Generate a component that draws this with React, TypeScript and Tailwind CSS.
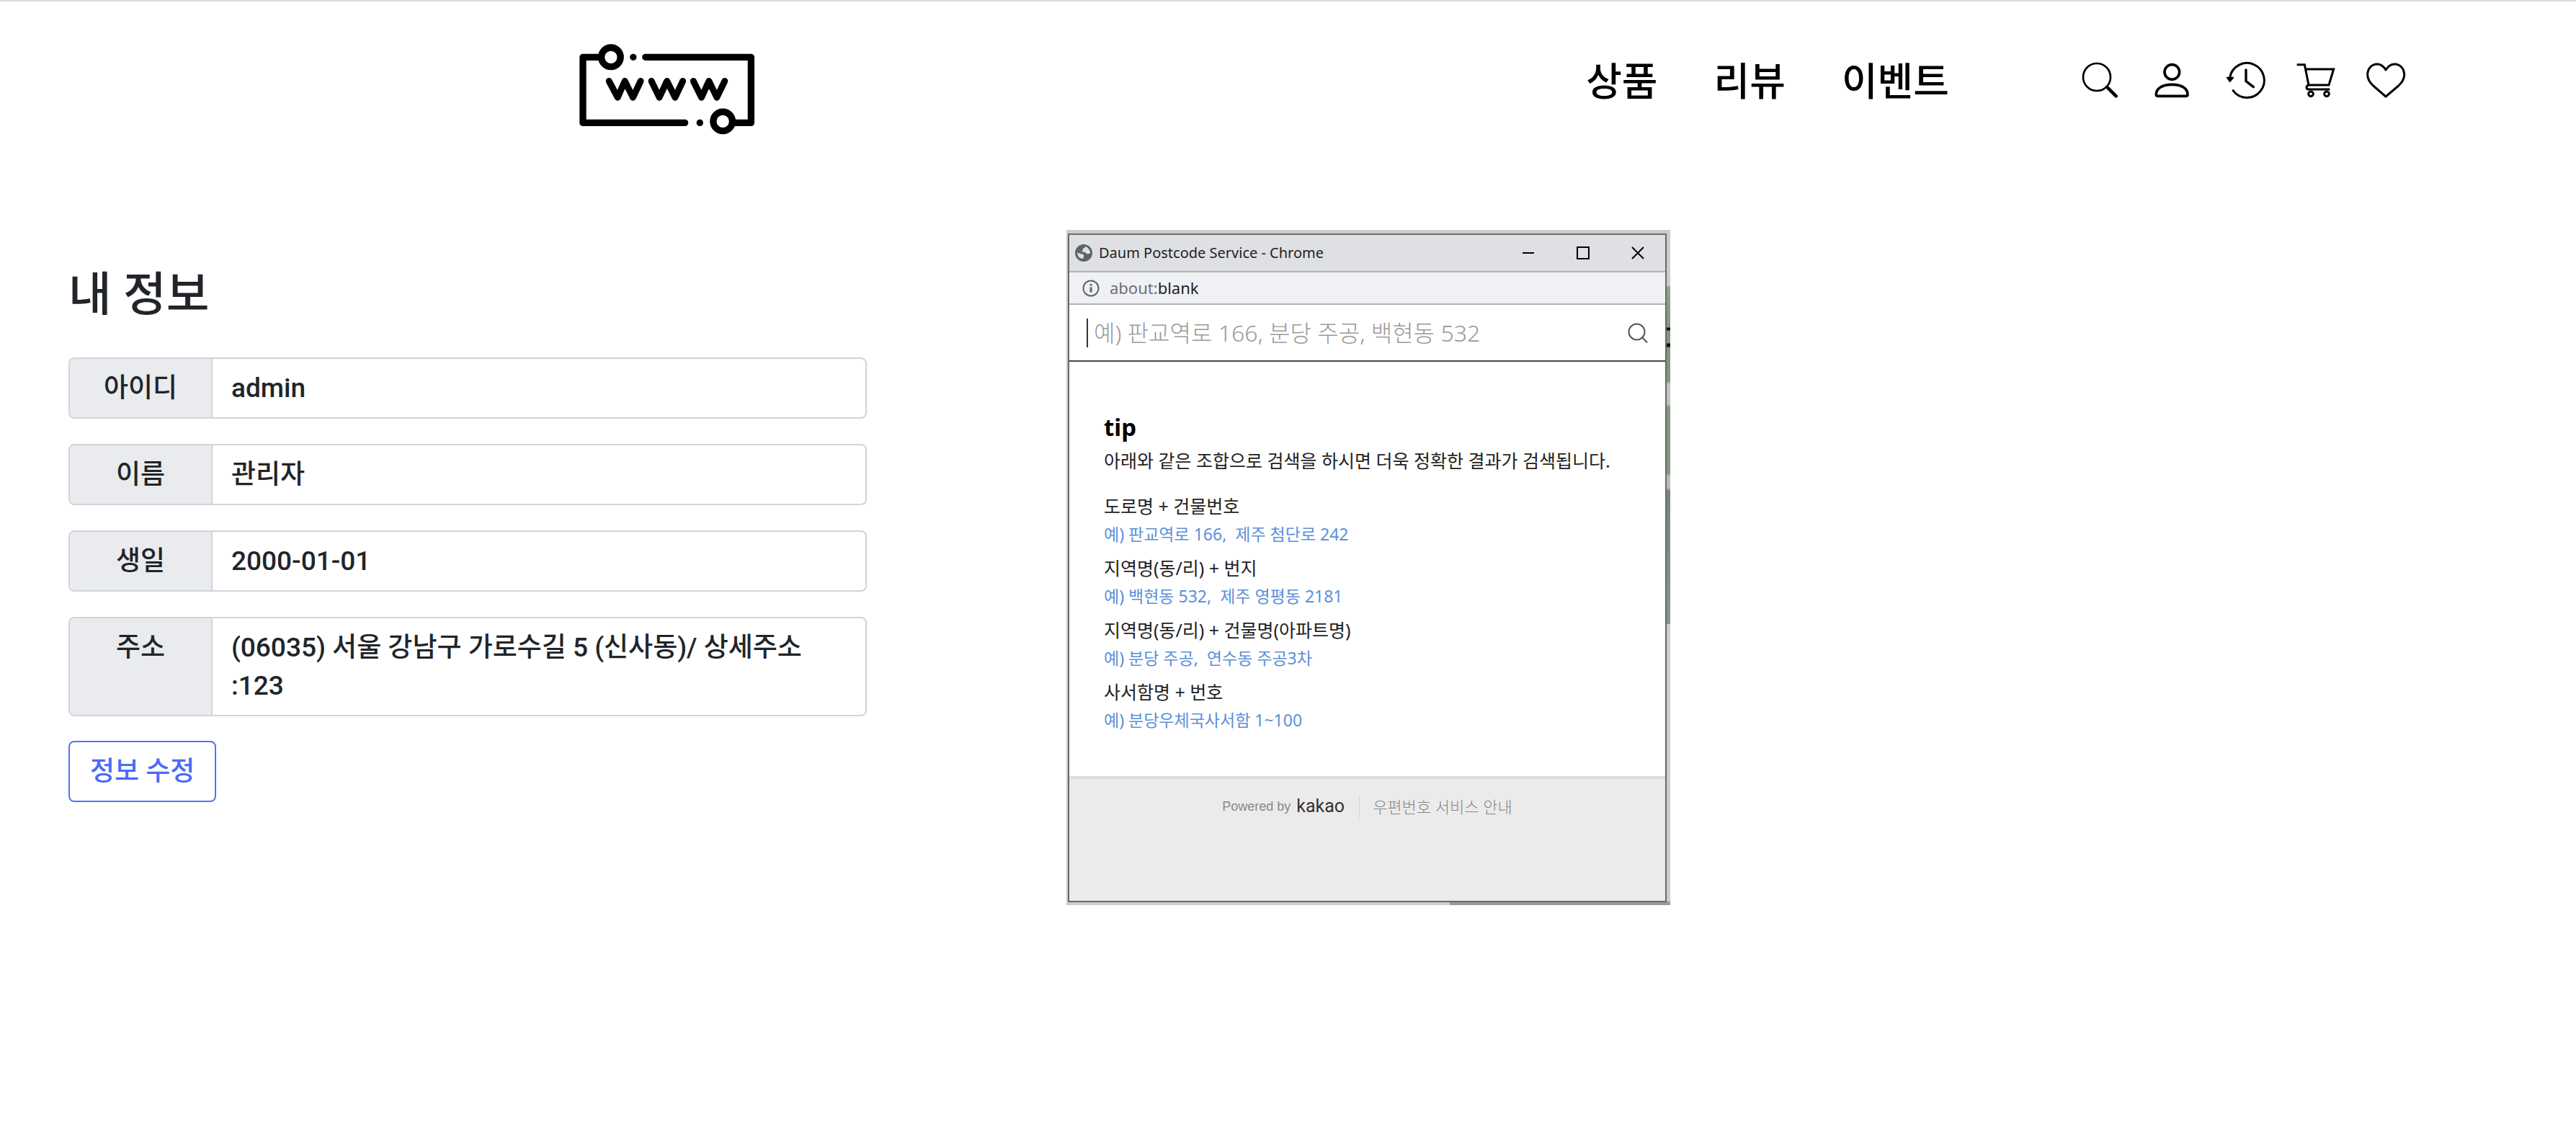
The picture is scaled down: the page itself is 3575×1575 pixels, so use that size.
import React from "react";

const fields = [
  { id: "user-id", label: "아이디", value: "admin" },
  { id: "user-name", label: "이름", value: "관리자" },
  { id: "user-birth", label: "생일", value: "2000-01-01" },
  {
    id: "user-address",
    label: "주소",
    value: "(06035) 서울 강남구 가로수길 5 (신사동)/ 상세주소 :123",
  },
];

const tips = [
  { title: "도로명 + 건물번호", examples: ["판교역로 166,", "제주 첨단로 242"] },
  { title: "지역명(동/리) + 번지", examples: ["백현동 532,", "제주 영평동 2181"] },
  { title: "지역명(동/리) + 건물명(아파트명)", examples: ["분당 주공,", "연수동 주공3차"] },
  { title: "사서함명 + 번호", examples: ["분당우체국사서함 1~100"] },
];

function Logo() {
  return (
    <svg viewBox="70 60 735 382" className="h-[127px] w-[245px]" fill="none" stroke="#000" strokeWidth="28" strokeLinecap="round" strokeLinejoin="round" aria-hidden="true">
      <path d="M155 118H87V392H513M348 118H789V392H720" />
      <circle cx="204" cy="118" r="40" />
      <circle cx="671" cy="386" r="40" />
      <path d="M297 118h.1M575 392h.1" />
      <path strokeWidth="27" d="M196 218L232 286L262 218L296 286L328 218M373 218L406 286L438 218L472 286L504 218M548 218L582 286L613 218L646 286L679 218" />
    </svg>
  );
}

const iconClass = "size-[54px] overflow-visible";

const actions = [
  {
    label: "검색",
    icon: (
      <svg viewBox="85 69 162 162" className={iconClass} fill="none" stroke="#000" strokeWidth="8" strokeLinecap="round">
        <circle cx="151" cy="138" r="57" />
        <path d="M191 178l5 5" />
        <path strokeWidth="14" d="M198 184l33 33" />
      </svg>
    ),
  },
  {
    label: "내 정보",
    icon: (
      <svg viewBox="382 69 162 162" className={iconClass} fill="none" stroke="#000" strokeWidth="11" strokeLinejoin="round">
        <circle cx="464" cy="117" r="31" />
        <path d="M398 211C398 184 424 169 464 169S529 184 529 211Q529 217 523 217H404Q398 217 398 211Z" />
      </svg>
    ),
  },
  {
    label: "최근 본 상품",
    icon: (
      <svg viewBox="679 69 162 162" className={iconClass} fill="none" stroke="#000" strokeWidth="9" strokeLinecap="round">
        <path d="M705 140A72 72 0 1 1 718 194" />
        <path d="M772 108V155L803 179" strokeWidth="10" />
        <path d="M693 140H719L705 157Z" fill="#000" strokeWidth="5" strokeLinejoin="round" />
      </svg>
    ),
  },
  {
    label: "장바구니",
    icon: (
      <svg viewBox="976 69 162 162" className={iconClass} fill="none" stroke="#000" strokeWidth="9">
        <path d="M984 86H1016L1033 171H1117L1137 105H1020" />
        <path d="M1033 171Q1024 174 1024 181Q1024 189 1033 189H1121" />
        <circle cx="1042" cy="208" r="10" />
        <circle cx="1108" cy="208" r="10" />
      </svg>
    ),
  },
  {
    label: "찜",
    icon: (
      <svg viewBox="1273 69 162 162" className={iconClass} fill="none" stroke="#000" strokeWidth="9" strokeLinejoin="round">
        <path d="M1354 108C1344 92 1333 84 1318 84C1295 84 1278 103 1278 128C1278 147 1288 161 1302 174L1354 219L1407 174C1421 161 1431 147 1431 128C1431 103 1414 84 1391 84C1376 84 1364 92 1354 108Z" />
      </svg>
    ),
  },
];

function Header() {
  return (
    <header className="flex items-start justify-between border-t-2 border-[#dedede] pt-[58px] pr-[6.63%] pb-[20px] pl-[22.46%]">
      <a href="#home" aria-label="www">
        <Logo />
      </a>
      <div className="mt-[17px] flex items-center gap-[183px]">
        <nav className="flex gap-[78px] pt-2 text-[54px] leading-[60px] font-medium text-black">
          <a href="#products">상품</a>
          <a href="#reviews">리뷰</a>
          <a href="#events">이벤트</a>
        </nav>
        <div className="flex gap-[45px]">
          {actions.map((a) => (
            <button key={a.label} type="button" aria-label={a.label}>
              {a.icon}
            </button>
          ))}
        </div>
      </div>
    </header>
  );
}

function Profile() {
  return (
    <section className="w-[1108px] text-[37px] leading-[53px] font-medium text-[#212529]">
      <h1 className="text-[65px] leading-[76px]">내 정보</h1>
      <dl className="mt-[49px] flex flex-col gap-[35px]">
        {fields.map((f) => (
          <div key={f.id} className="flex rounded-lg border-2 border-[#d1d5db] bg-white">
            <dt className="w-[198px] shrink-0 rounded-l-md border-r-2 border-[#d1d5db] bg-[#e9ebef] py-[14px] text-center">
              {f.label}
            </dt>
            <dd className="px-[26px] py-[14px]">{f.value}</dd>
          </div>
        ))}
      </dl>
      <button type="button" className="mt-[34px] rounded-lg border-2 border-[#4f74f5] px-[28px] py-[14px] text-[#4a6cf7]">
        정보 수정
      </button>
    </section>
  );
}

function PostcodeWindow() {
  return (
    <div className="relative w-[838px] bg-[#cdcdcd] pt-[5px] pr-[5px] pb-[4px] pl-[2px] font-['Noto_Sans','Noto_Sans_CJK_KR',sans-serif]">
      <div
        aria-hidden="true"
        className="absolute top-[78px] right-0 h-[469px] w-[5px] bg-[linear-gradient(#93a78a_0px,#82977f_57px,#111_58px,#111_61px,#82977f_62px,#82977f_79px,#111_80px,#111_84px,#82977f_85px,#82977f_132px,#bfc3bf_136px,#bfc3bf_164px,#82977f_168px,#82977f_260px,#b9bdb9_264px,#b9bdb9_280px,#76867a_284px,#84988a_469px)]"
      />
      <div aria-hidden="true" className="absolute right-0 bottom-0 h-[5px] w-[306px] bg-[#9a9a9a]" />
      <div className="relative border-2 border-[#6a6a6a] bg-white text-[#222]">
        <div className="flex h-[52px] items-center border-b-2 border-[#b2b3b5] bg-[#dfe0e4] pr-[29px] pl-[8px]">
          <svg viewBox="0 0 24 24" className="size-[24px]" aria-hidden="true">
            <circle cx="12" cy="12" r="12" fill="#5f6368" />
            <path d="M3 11c2 2 6 2 8 3s1 3 0 6c-5 0-8-4-8-9ZM15 3c-1 2-4 2-4 4s-2 2-2 3 5 0 6 2 2 1 4 1 2-1 2-2-2-6-6-8Z" fill="#dfe0e4" />
          </svg>
          <span className="ml-[9px] text-[20px] text-[#222]">Daum Postcode Service - Chrome</span>
          <div className="ml-auto flex gap-[58px]">
            <button type="button" aria-label="최소화">
              <svg viewBox="0 0 18 18" className="size-[18px]" fill="none" stroke="#000" strokeWidth="2"><path d="M1 9H17" /></svg>
            </button>
            <button type="button" aria-label="최대화">
              <svg viewBox="0 0 18 18" className="size-[18px]" fill="none" stroke="#000" strokeWidth="2"><path d="M1 1H17V17H1Z" /></svg>
            </button>
            <button type="button" aria-label="닫기">
              <svg viewBox="0 0 18 18" className="size-[18px]" fill="none" stroke="#000" strokeWidth="2"><path d="M1 1L17 17M17 1L1 17" /></svg>
            </button>
          </div>
        </div>
        <div className="flex h-[45px] items-center border-b-2 border-[#b2b3b5] bg-[#f0f1f4] pl-[18px]">
          <svg viewBox="0 0 24 24" className="size-[24px]" fill="none" stroke="#5f6368" strokeWidth="2" aria-hidden="true">
            <circle cx="12" cy="12" r="10.5" />
            <path strokeWidth="3" d="M12 10.5V17.5M12 6V8.5" />
          </svg>
          <span className="ml-[14px] text-[22px] text-[#6b6f76]">
            about:<span className="text-[#222]">blank</span>
          </span>
        </div>
        <form className="flex h-[79px] items-center border-b-2 border-[#444] pr-[24px] pl-[24px]">
          <span className="h-[40px] w-[2px] bg-[#333]" aria-hidden="true" />
          <input
            type="text"
            aria-label="주소 검색"
            placeholder="예) 판교역로 166, 분당 주공, 백현동 532"
            className="ml-[8px] min-w-0 flex-1 text-[32px] font-light outline-none placeholder:text-[#999]"
          />
          <button type="submit" aria-label="검색">
            <svg viewBox="0 0 28 28" className="size-[28px]" fill="none" stroke="#555" strokeWidth="2">
              <circle cx="12.5" cy="12.5" r="11" />
              <path d="M20.5 20.5L27 27.5" />
            </svg>
          </button>
        </form>
        <div className="px-[48px] pt-[69px] pb-[58px] text-[25px] leading-[32px]">
          <h2 className="text-[33px] leading-[44px] font-bold text-black">tip</h2>
          <p className="mt-[8px] whitespace-nowrap">아래와 같은 조합으로 검색을 하시면 더욱 정확한 결과가 검색됩니다.</p>
          <dl className="mt-[20px]">
            {tips.map((t) => (
              <div key={t.title} className="pt-[8px]">
                <dt className="leading-[38px]">{t.title}</dt>
                <dd className="flex gap-[12px] text-[23px] leading-[40px] text-[#5b8fd8]">
                  {t.examples.map((e, i) => (
                    <span key={e}>{i === 0 ? "예) " + e : e}</span>
                  ))}
                </dd>
              </div>
            ))}
          </dl>
        </div>
        <footer className="flex h-[173px] items-start justify-center border-t-4 border-[#dcdcdc] bg-[#ebebeb] pt-[22px] leading-[32px] text-[#888]">
          <span className="font-['Liberation_Sans'] text-[18px]">Powered by</span>
          <strong className="ml-[8px] font-[Roboto] text-[25px] font-normal text-[#333]">kakao</strong>
          <a href="#guide" className="ml-[20px] border-l border-[#d5d5d5] pl-[18px] text-[22px] font-light">우편번호 서비스 안내</a>
        </footer>
      </div>
    </div>
  );
}

export default function App() {
  return (
    <div className="min-h-screen bg-white font-['Roboto','Noto_Sans_CJK_KR',sans-serif]">
      <Header />
      <main className="flex items-start gap-[277px] pl-[95px]">
        <div className="pt-[164px]">
          <Profile />
        </div>
        <div className="pt-[112px]">
          <PostcodeWindow />
        </div>
      </main>
    </div>
  );
}
